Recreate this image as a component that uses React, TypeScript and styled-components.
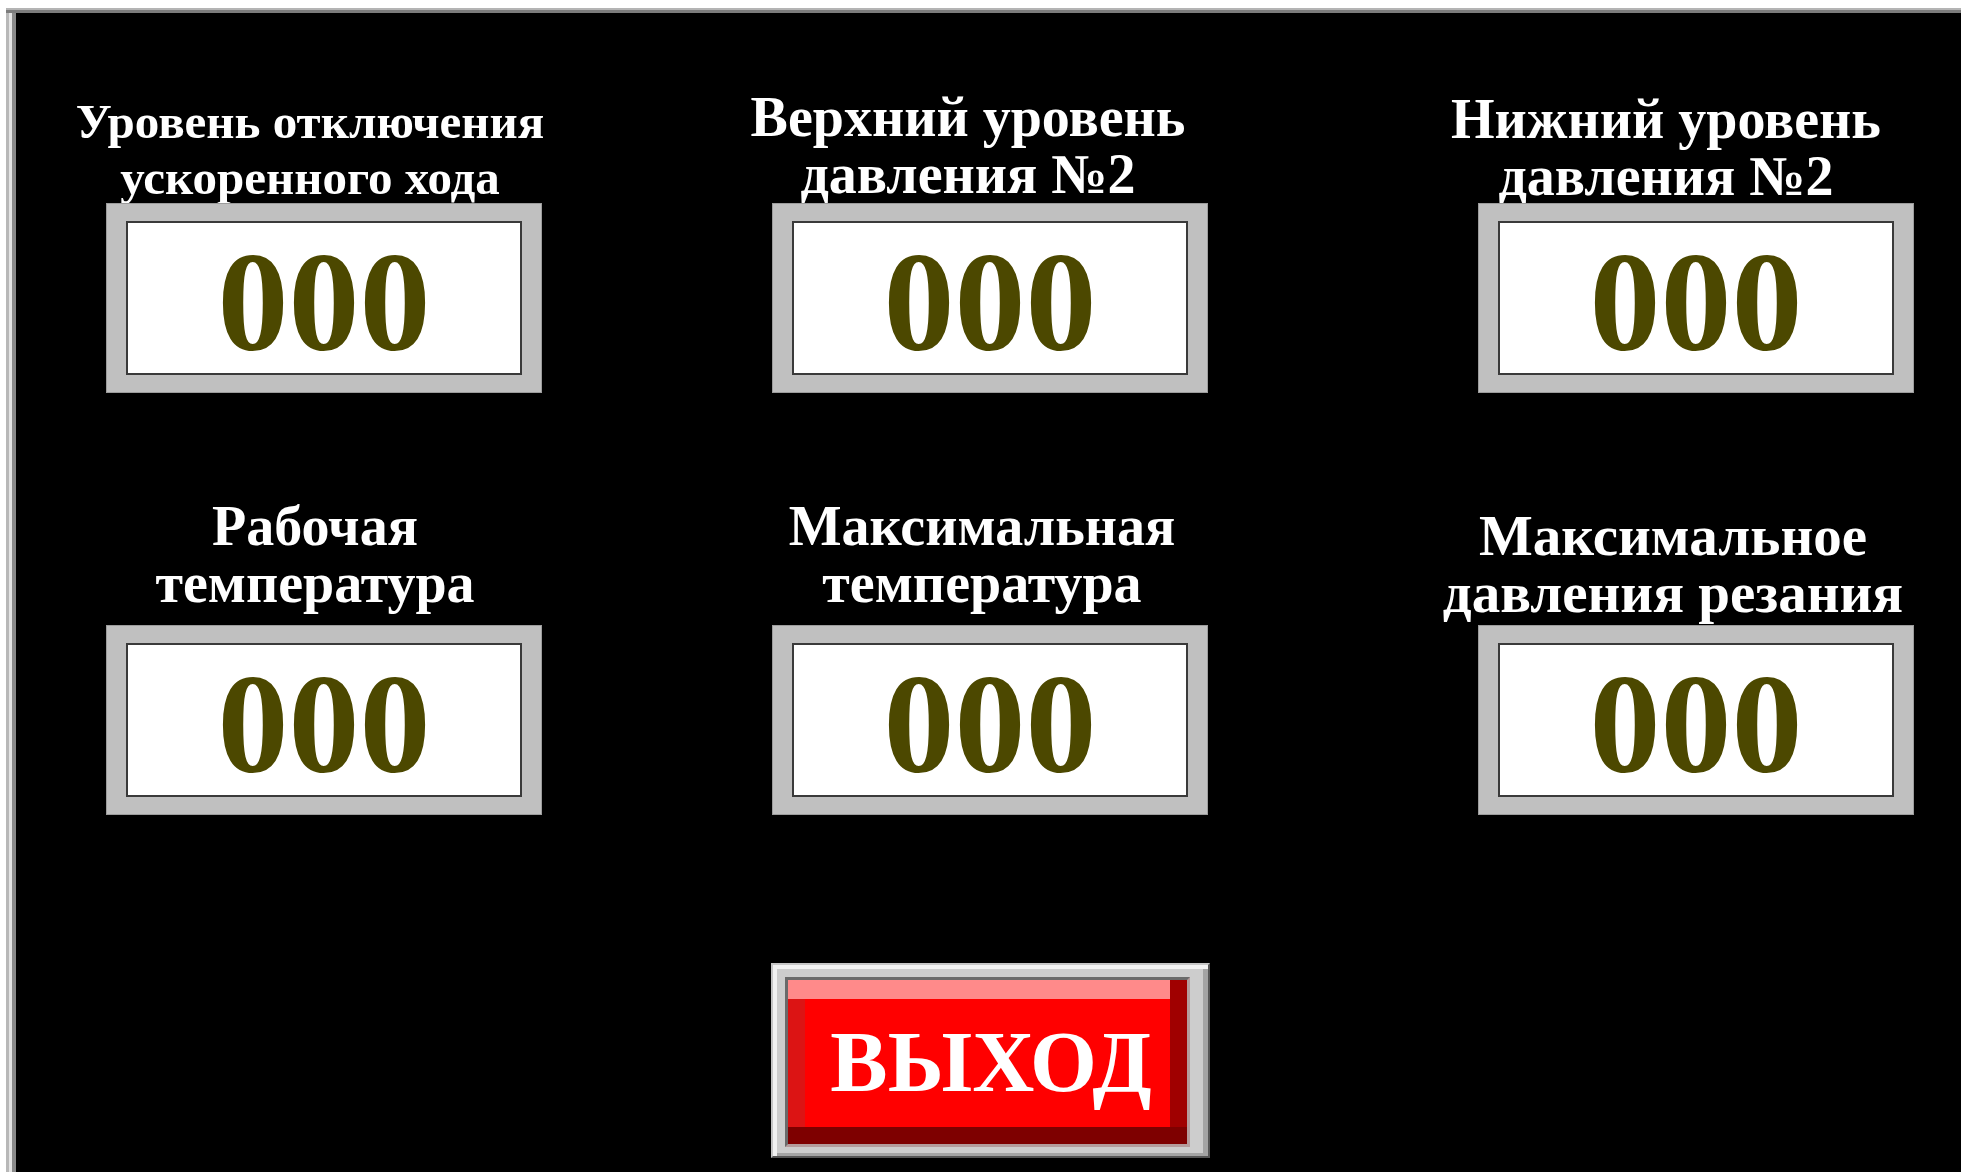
import styled, { createGlobalStyle } from 'styled-components'

/* ---------------- global ---------------- */

const GlobalStyle = createGlobalStyle`
  html, body { margin: 0; padding: 0; background: #fff; overflow: hidden; }
  #root { height: 100vh; }
`

/* ---------------- panel ---------------- */

const Screen = styled.main`
  margin: 8px 0 0 6px;
  height: calc(100vh - 8px);
  box-sizing: border-box;
  padding-left: 100px;
  background: #000;
  /* window frame, top and left edges only */
  box-shadow:
    inset 0 2px 0 #b4b4b4,
    inset 0 5px 0 #7c7c7c,
    inset 3px 0 0 #b8b8b8,
    inset 6px 0 0 #e4e4e4,
    inset 10px 0 0 #8a8a8a;
  display: grid;
  grid-template-columns: 666px 706px 436px;
  grid-template-rows: 385px 422px 343px;
  font-family: 'Liberation Serif', 'Times New Roman', serif;
`

const Cell = styled.section`
  width: 436px;
  display: flex;
  flex-direction: column;
  align-items: center;
  justify-content: flex-end;
`

const ButtonCell = styled(Cell)`
  grid-column: 2;
  grid-row: 3;
`

const Title = styled.h2<{ $size: number; $lh: number; $gap: number; $shift: number }>`
  margin: 0 ${({ $shift }) => $shift * 2}px ${({ $gap }) => $gap}px 0;
  color: #fff;
  font-weight: 700;
  font-size: ${({ $size }) => $size}px;
  line-height: ${({ $lh }) => $lh}px;
  text-align: center;
  white-space: nowrap;
`

const Readout = styled.div`
  box-sizing: border-box;
  width: 436px;
  height: 190px;
  padding: 17px 19px;
  background: #c0c0c0;
  border: 1px solid #9c9c9c;
`

const Value = styled.div`
  box-sizing: border-box;
  height: 100%;
  border: 2px solid #3a3a3a;
  background: #fff;
  display: flex;
  align-items: center;
  justify-content: center;
  padding-top: 8px;
  color: #4c4800;
  font-size: 142px;
  font-weight: 700;
  line-height: 1;
`

/* ---------------- exit button ---------------- */

const ExitButton = styled.button`
  box-sizing: border-box;
  display: block;
  width: 439px;
  height: 195px;
  padding: 12px 18px 9px 12px;
  border: 2px solid;
  border-color: #c6c6c6 #555 #555 #c6c6c6;
  background: #cdcdcd;
  box-shadow: inset 4px 4px 0 #f2f2f2, inset -5px -3px 0 #a4a4a4;
  cursor: pointer;
`

const Face = styled.span`
  box-sizing: border-box;
  display: flex;
  align-items: center;
  justify-content: center;
  height: 100%;
  padding-left: 8px;
  border: 3px solid;
  border-color: #6a6a6a #b49c9c #b49c9c #6a6a6a;
  background: #ff0000;
  box-shadow:
    inset 0 -17px 0 #7e0000,
    inset -17px 0 0 #a00000,
    inset 0 19px 0 #ff8a8a,
    inset 17px 0 0 #dc1414;
  color: #fff;
  font-family: 'Liberation Serif', 'Times New Roman', serif;
  font-size: 86px;
  font-weight: 700;
  line-height: 1;
`

/* ---------------- data ---------------- */

type Param = {
  lines: [string, string]
  size: number
  lh: number
  gap: number
  shift: number
  value: string
}

const params: Param[] = [
  { lines: ['Уровень отключения', 'ускоренного хода'], size: 49, lh: 56, gap: -3, shift: 14, value: '000' },
  { lines: ['Верхний уровень', 'давления №2'], size: 56, lh: 57, gap: 0, shift: 22, value: '000' },
  { lines: ['Нижний уровень', 'давления №2'], size: 56, lh: 57, gap: -2, shift: 30, value: '000' },
  { lines: ['Рабочая', 'температура'], size: 56, lh: 57, gap: 13, shift: 9, value: '000' },
  { lines: ['Максимальная', 'температура'], size: 56, lh: 57, gap: 13, shift: 8, value: '000' },
  { lines: ['Максимальное', 'давления резания'], size: 57, lh: 57, gap: 4, shift: 23, value: '000' },
]

export default function App() {
  return (
    <>
      <GlobalStyle />
      <Screen>
        {params.map((p) => (
          <Cell key={p.lines.join(' ')}>
            <Title $size={p.size} $lh={p.lh} $gap={p.gap} $shift={p.shift}>
              {p.lines[0]}
              <br />
              {p.lines[1]}
            </Title>
            <Readout>
              <Value>{p.value}</Value>
            </Readout>
          </Cell>
        ))}
        <ButtonCell>
          <ExitButton type="button">
            <Face>ВЫХОД</Face>
          </ExitButton>
        </ButtonCell>
      </Screen>
    </>
  )
}
